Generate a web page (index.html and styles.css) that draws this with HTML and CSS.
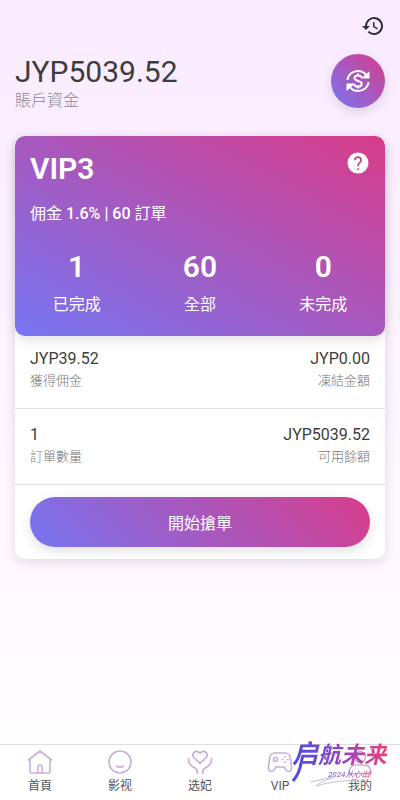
FILE: index.html
```html
<!DOCTYPE html>
<html lang="zh-Hant">
<head>
  <meta charset="UTF-8">
  <meta name="viewport" content="width=device-width, initial-scale=1.0">
  <title>VIP3</title>
  <link rel="stylesheet" href="styles.css">
</head>
<body>
  <header class="topbar">
    <button class="icon-btn" type="button" aria-label="歷史">
      <svg width="24" height="24" viewBox="0 0 24 24" fill="currentColor"><path d="M13 3a9 9 0 0 0-9 9H1l3.890 3.890.070.140L9 12H6a7 7 0 1 1 2.060 4.940l-1.420 1.420A9 9 0 1 0 13 3zm-1 5v5l4.280 2.540.720-1.210-3.500-2.080V8z"/></svg>
    </button>
  </header>

  <main class="content">
    <section class="balance">
      <div>
        <h1 class="amount">JYP5039.52</h1>
        <p class="amount-label">賬戶資金</p>
      </div>
      <button class="exchange" type="button" aria-label="兌換">
        <svg width="28" height="28" viewBox="0 0 28 28" fill="none" stroke="currentColor" stroke-width="2">
          <path d="M3.500 13C4 7.500 8.500 4 14 4c3.800 0 6.500 1.500 8.500 4.500M24.500 15C24 20.500 19.500 24 14 24c-3.800 0-6.500-1.500-8.500-4.500"/>
          <path d="M25.500 4v7.500H17zM2.500 24v-7.500H11z" fill="currentColor" stroke="none"/>
          <path d="M17.500 11c0-1.700-1.500-2.600-3.500-2.600s-3.500 1-3.500 2.700c0 4 7.200 1.800 7.200 5.800 0 1.700-1.600 2.700-3.700 2.700s-3.700-1-3.700-2.700M14 6.500v2M14 19.500v2"/>
        </svg>
      </button>
    </section>

    <section class="card">
      <div class="vip">
        <div class="vip-head">
          <h2 class="vip-title">VIP3</h2>
          <button class="icon-btn" type="button" aria-label="說明">
            <svg width="24" height="24" viewBox="0 0 24 24" fill="currentColor"><path fill-rule="evenodd" d="M12 1.500a10.500 10.500 0 1 0 0 21 10.500 10.500 0 0 0 0-21zM11.200 17.300h1.700V19h-1.700zM8 9.200a4 4 0 0 1 8 0c0 2.600-3.100 2.900-3.100 6.100h-1.700c0-3.900 3-4.200 3-6.100a2.200 2.200 0 0 0-4.400 0z"/></svg>
          </button>
        </div>
        <p class="vip-rate">佣金 <b>1.6% | 60</b> 訂單</p>
        <div class="stats">
          <div class="stat"><strong>1</strong><span>已完成</span></div>
          <div class="stat"><strong>60</strong><span>全部</span></div>
          <div class="stat"><strong>0</strong><span>未完成</span></div>
        </div>
      </div>
      <div class="row">
        <div><p class="value">JYP39.52</p><p class="label">獲得佣金</p></div>
        <div class="right"><p class="value">JYP0.00</p><p class="label">凍結金額</p></div>
      </div>
      <div class="row">
        <div><p class="value">1</p><p class="label">訂單數量</p></div>
        <div class="right"><p class="value">JYP5039.52</p><p class="label">可用餘額</p></div>
      </div>
      <div class="action">
        <button class="start" type="button">開始搶單</button>
      </div>
    </section>
  </main>

  <nav class="tabbar">
    <a class="tab" href="#">
      <svg viewBox="0 0 26 26"><path d="M1.500 11 13 2l11.500 9M3 10v12.500Q3 24 4.500 24h17q1.500 0 1.500-1.500V10M10.800 24v-6q0-2 2.200-2t2.200 2v6"/></svg>
      <span>首頁</span>
    </a>
    <a class="tab" href="#">
      <svg viewBox="0 0 26 26"><circle cx="13" cy="13" r="11"/><path d="M9.500 17q3.500 2.500 7 0"/></svg>
      <span>影视</span>
    </a>
    <a class="tab" href="#">
      <svg viewBox="0 0 26 26"><path d="M13 14.500 7.300 9C3.500 5 8.500-.5 13 4.200 17.500-.5 22.500 5 18.700 9zM1.500 9.500c0 6.500 3 7.500 6.500 9.500 2 1.200 2.500 2.500 2.500 5.500M24.500 9.500c0 6.500-3 7.500-6.500 9.500-2 1.200-2.500 2.500-2.500 5.500"/></svg>
      <span>选妃</span>
    </a>
    <a class="tab" href="#">
      <svg viewBox="0 0 26 26"><path d="M8 4h10c4 0 5 2 5.500 6l1 8c.5 5-3.500 5.500-5.500 3l-2-3H9l-2 3c-2 2.500-6 2-5.500-3l1-8C3 6 4 4 8 4z"/><circle cx="8.500" cy="10.500" r="2"/><path d="M18 7.500v.8M18 12.700v.8M15 10.500h.8M20.200 10.500h.8"/></svg>
      <span>VIP</span>
    </a>
    <a class="tab" href="#">
      <svg viewBox="0 0 26 26"><circle cx="13" cy="8" r="5.500"/><path d="M2 23c0-4 3-7 7-7h8c4 0 7 3 7 7 0 1-1 1.500-2 1.500H4c-1 0-2-.5-2-1.500z"/></svg>
      <span>我的</span>
    </a>
    <div class="badge">
      <span class="badge-title"><span class="badge-lead">启</span>航未来</span>
      <span class="badge-note">2024从心出!</span>
      <svg class="badge-swash" viewBox="0 0 96 50" fill="none"><path d="M18 40 42 35Q26 41 24 44 42 38 76 38" stroke="#c8bfd8"/><path d="M1 39Q7 32 9 22" stroke="#5548de" stroke-width="3"/></svg>
    </div>
  </nav>
</body>
</html>
```

FILE: styles.css
```css
:root {
  --gradient: linear-gradient(to top right, #7675f3, #d83c89);
  --shadow: 0 4px 12px rgba(0, 0, 0, 0.12);
}

* {
  box-sizing: border-box;
}

body {
  margin: 0;
  min-height: 100vh;
  display: flex;
  flex-direction: column;
  font-family: Roboto, "Noto Sans CJK TC", sans-serif;
  color: #3d3d3d;
  background: linear-gradient(#faebff, #ffffff);
}

h1, h2, p {
  margin: 0;
  font-weight: 400;
}

button {
  border: none;
  padding: 0;
  font-family: inherit;
  color: inherit;
  background: none;
  cursor: pointer;
}

svg {
  display: block;
}

.topbar {
  display: flex;
  justify-content: flex-end;
  padding: 14px 15px;
  color: #302b3e;
}

.content {
  flex: 1;
  padding: 0 15px;
}

.balance {
  display: flex;
  justify-content: space-between;
  align-items: flex-start;
  margin: 2px 0 24px;
}

.amount {
  font-size: 30px;
  line-height: 36px;
}

.amount-label {
  font-size: 16px;
  line-height: 22px;
  font-weight: 300;
  color: #8c8490;
}

.exchange {
  width: 54px;
  height: 54px;
  display: flex;
  align-items: center;
  justify-content: center;
  border-radius: 50%;
  color: #fff;
  background: var(--gradient);
  box-shadow: var(--shadow);
}

.card {
  border-radius: 10px;
  background: #fff;
  box-shadow: var(--shadow);
}

.vip {
  padding: 15px 15px 20px;
  border-radius: 10px;
  color: #fff;
  background: var(--gradient);
  box-shadow: var(--shadow);
}

.vip-head {
  display: flex;
  justify-content: space-between;
  align-items: flex-start;
}

.vip-title {
  font-size: 30px;
  line-height: 36px;
  font-weight: 600;
}

.vip-rate {
  margin-top: 16px;
  font-size: 16px;
  line-height: 22px;
}

.vip-rate b {
  font-weight: 500;
}

.stats {
  display: grid;
  grid-template-columns: repeat(3, 1fr);
  margin: 24px -15px 0;
  text-align: center;
}

.stat strong,
.stat span {
  display: block;
}

.stat strong {
  font-size: 30px;
  line-height: 36px;
  font-weight: 600;
}

.stat span {
  margin-top: 9px;
  font-size: 16px;
  line-height: 22px;
}

.row {
  display: flex;
  justify-content: space-between;
  padding: 15px 15px 16px;
  border-bottom: 1px solid #e2e2e2;
}

.row:nth-child(2) {
  padding-top: 12px;
}

.right {
  text-align: right;
}

.value {
  font-size: 16px;
  line-height: 22px;
}

.label {
  font-size: 13px;
  line-height: 22px;
  font-weight: 300;
  color: #777;
}

.action {
  padding: 12px 15px;
}

.start {
  width: 100%;
  height: 50px;
  border-radius: 25px;
  font-size: 16px;
  color: #fff;
  background: linear-gradient(45deg, #7675f3, #d83c89);
  box-shadow: var(--shadow);
}

.tabbar {
  position: relative;
  display: flex;
  height: 56px;
  border-top: 1px solid #dedede;
  background: #fff;
}

.tab {
  flex: 1;
  display: flex;
  flex-direction: column;
  align-items: center;
  padding-top: 4px;
  font-size: 12px;
  line-height: 22px;
  color: #555;
  text-decoration: none;
}

.tab svg {
  width: 26px;
  height: 26px;
  fill: none;
  stroke: #c8aed8;
  stroke-width: 1.6;
  stroke-linecap: round;
  stroke-linejoin: round;
}

/* promo mark over the last tabs */
.badge {
  position: absolute;
  right: 12px;
  bottom: 8px;
  width: 96px;
  height: 54px;
  font-style: italic;
  pointer-events: none;
}

.badge-title,
.badge-note {
  position: absolute;
  color: transparent;
  white-space: nowrap;
  background: linear-gradient(to right, #4a4de0, #8a46cc 45%, #e84078);
  -webkit-background-clip: text;
  background-clip: text;
}

.badge-title {
  top: -4px;
  left: 0;
  font-family: "Noto Sans CJK SC", sans-serif;
  font-size: 23px;
  line-height: 36px;
  font-weight: 700;
}

.badge-lead {
  font-size: 26px;
}

.badge-note {
  top: 32px;
  left: 36px;
  font-size: 8px;
  line-height: 10px;
}

.badge-swash {
  position: absolute;
  top: 4px;
  left: 0;
  width: 96px;
  height: 50px;
}
```
